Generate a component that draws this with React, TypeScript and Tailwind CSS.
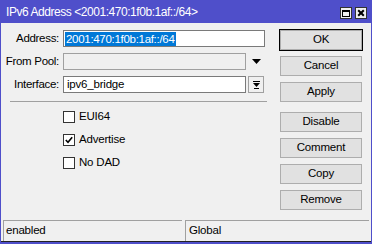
import React from "react";

const font = { fontFamily: '"Liberation Sans", Arial, sans-serif' };

function Btn({ label, def }: { label: string; def?: boolean }) {
  if (def) {
    return (
      <div className="h-[22px] w-[84px] border border-black">
        <div className="h-full w-full flex items-center justify-center text-[11.5px] tracking-[-0.2px] text-black bg-[#e1e1e1] border border-[#adadad]">
          {label}
        </div>
      </div>
    );
  }
  return (
    <div className="h-[20px] w-[82px] mx-[1px] flex items-center justify-center text-[11.5px] tracking-[-0.2px] text-black bg-[#e1e1e1] border border-[#adadad]">
      {label}
    </div>
  );
}

function Check({ label, checked }: { label: string; checked?: boolean }) {
  return (
    <div className="flex items-center h-[12px] gap-[4px]">
      <div className="w-[12px] h-[12px] border border-[#333333] bg-white flex items-center justify-center">
        {checked && (
          <svg width="8" height="8" viewBox="0 0 8 8">
            <path d="M0.8 4 L3 6.3 L7.2 1.2" stroke="#000" strokeWidth="1.6" fill="none" />
          </svg>
        )}
      </div>
      <span className="text-[11.5px] tracking-[-0.2px] text-black leading-none">{label}</span>
    </div>
  );
}

export default function App() {
  return (
    <div className="w-[372px] h-[244px] bg-[#4f4fca] pl-[1px] pr-[1px] pb-[2px] flex flex-col" style={font}>
      <div className="h-[23px] flex items-center justify-between pl-[5px] pr-[4px] shrink-0">
        <span className="text-white text-[12px] tracking-[-0.45px] mt-[1px]">IPv6 Address &lt;2001:470:1f0b:1af::/64&gt;</span>
        <div className="flex gap-[3px] mt-[3px]">
          <div className="w-[12px] h-[12px] bg-[#f0f0f0] border border-[#333] flex items-center justify-center">
            <div className="w-[8px] h-[7px] border border-black border-t-2"></div>
          </div>
          <div className="w-[12px] h-[12px] bg-[#f0f0f0] border border-[#333] flex items-center justify-center">
            <svg width="8" height="8" viewBox="0 0 8 8">
              <path d="M1.2 1.2 L6.8 6.8 M6.8 1.2 L1.2 6.8" stroke="#000" strokeWidth="2" />
            </svg>
          </div>
        </div>
      </div>
      <div className="flex-1 bg-[#f0f0f0] flex flex-col border-b border-[#222]">
        <div className="flex-1 flex pt-[6px]">
          <div className="w-[278px] flex flex-col pl-[2px]">
            <div className="flex items-center h-[17px] mt-[1px]">
              <span className="w-[60px] text-right text-[11.5px] tracking-[-0.3px] text-black pr-[4px]">Address:</span>
              <div className="w-[202px] h-[17px] border border-[#7a7a7a] bg-white flex items-center pl-[1px]">
                <span className="bg-[#0078d7] text-white text-[11.5px] tracking-[-0.3px] leading-[14px] px-[1px]">2001:470:1f0b:1af::/64</span>
              </div>
            </div>
            <div className="flex items-center h-[17px] mt-[6px]">
              <span className="w-[60px] text-right text-[11.5px] tracking-[-0.3px] text-black pr-[4px]">From Pool:</span>
              <div className="w-[183px] h-[17px] border border-[#a0a0a0] bg-[#f0f0f0]"></div>
              <div className="w-[20px] flex justify-center">
                <svg width="9" height="5" viewBox="0 0 9 5"><path d="M0 0 H9 L4.5 5 Z" fill="#000" /></svg>
              </div>
            </div>
            <div className="flex items-center h-[17px] mt-[6px]">
              <span className="w-[60px] text-right text-[11.5px] tracking-[-0.3px] text-black pr-[4px]">Interface:</span>
              <div className="w-[183px] h-[17px] border border-[#7a7a7a] bg-white flex items-center pl-[3px] text-[11.5px] tracking-[-0.2px] text-black">ipv6_bridge</div>
              <div className="w-[16px] h-[17px] ml-[2px] border border-[#a0a0a0] bg-[#f0f0f0] flex items-center justify-center">
                <svg width="7" height="8" viewBox="0 0 7 8">
                  <path d="M0 0.5 H7" stroke="#000" strokeWidth="1" />
                  <path d="M0 2 H7 L3.5 6 Z" fill="#000" />
                  <path d="M1 7.5 H6" stroke="#000" strokeWidth="1" />
                </svg>
              </div>
            </div>
            <div className="h-[1px] bg-[#a0a0a0] w-[257px] ml-[7px] mt-[8px]"></div>
            <div className="flex flex-col gap-[11px] pl-[60px] mt-[9px]">
              <Check label="EUI64" />
              <Check label="Advertise" checked />
              <Check label="No DAD" />
            </div>
          </div>
          <div className="flex flex-col gap-[6px]">
            <Btn label="OK" def />
            <div className="flex flex-col gap-[6px] -mt-[1px]">
              <Btn label="Cancel" />
              <Btn label="Apply" />
            </div>
            <div className="flex flex-col gap-[6px] mt-[4px]">
              <Btn label="Disable" />
              <Btn label="Comment" />
              <Btn label="Copy" />
              <Btn label="Remove" />
            </div>
          </div>
        </div>
        <div className="h-[21px] flex gap-[3px] pl-[2px] pr-[2px] shrink-0">
          <div className="w-[179px] border-t border-l border-[#a0a0a0] flex items-center pl-[2px] text-[11.5px] tracking-[-0.2px] text-black">enabled</div>
          <div className="flex-1 border-t border-l border-[#a0a0a0] flex items-center pl-[3px] text-[11.5px] tracking-[-0.2px] text-black">Global</div>
        </div>
      </div>
    </div>
  );
}
